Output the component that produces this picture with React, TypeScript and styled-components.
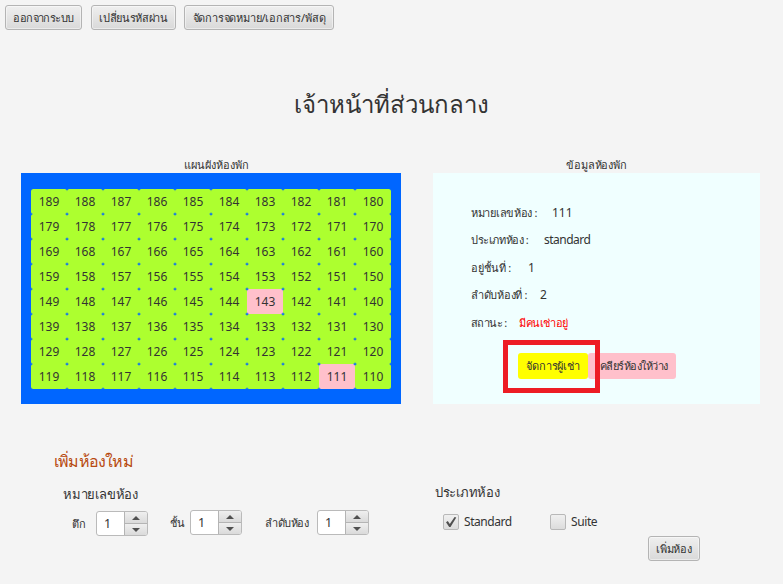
import React from "react";
import styled, { createGlobalStyle } from "styled-components";

const Global = createGlobalStyle`
  * { box-sizing: border-box; }
  body { margin: 0; background: #f4f4f4; }
`;

const Page = styled.main`
  width: 783px;
  height: 584px;
  overflow: hidden;
  background: #f4f4f4;
  color: #333;
  font: 12px/16px "Noto Sans", "Open Sans", sans-serif;
  white-space: nowrap;
`;

const Toolbar = styled.nav`
  display: flex;
  height: 30px;
  padding: 5px 0 0 5px;
`;

const Text = styled.span<{ $size?: number; $track?: number; $color?: string }>`
  font-size: ${(p) => p.$size ?? 11}px;
  letter-spacing: ${(p) => p.$track ?? 0}px;
  color: ${(p) => p.$color ?? "#333"};
`;

const Button = styled.button<{ $width: number; $gap?: number }>`
  display: flex;
  align-items: center;
  justify-content: center;
  width: ${(p) => p.$width}px;
  height: 25px;
  margin: 0 ${(p) => p.$gap ?? 0}px 0 0;
  padding: 0;
  border: 1px solid #b4b4b4;
  border-radius: 3px;
  background: linear-gradient(#efefef, #d9d9d9);
  box-shadow: inset 0 0 0 1px rgba(255, 255, 255, 0.45);
  font: inherit;
  line-height: 16px;
`;

const Title = styled.h1`
  height: 32px;
  margin: 58px 0 0;
  text-align: center;
  font-weight: 400;
  line-height: 32px;
`;

const Panels = styled.div`
  display: flex;
  gap: 32px;
  margin: 37px 0 0 21px;
`;

const PanelColumn = styled.section<{ $width: number }>`
  width: ${(p) => p.$width}px;
`;

const Caption = styled.div<{ $shift?: number }>`
  height: 16px;
  padding-left: ${(p) => p.$shift ?? 0}px;
  text-align: center;
`;

const FloorPlan = styled.div`
  display: grid;
  grid-template-columns: repeat(10, 36px);
  grid-auto-rows: 25px;
  height: 231px;
  padding: 16px 10px 0;
  background: #0066ff;
`;

const Room = styled.div<{ $taken: boolean }>`
  display: flex;
  align-items: center;
  justify-content: center;
  height: 25px;
  border-radius: 2.5px;
  background: ${(p) => (p.$taken ? "#ffc0cb" : "#adff2f")};
  font-size: 12px;
`;

const Details = styled.div`
  height: 231px;
  padding: 26px 0 0 38px;
  background: #f0ffff;
`;

const DetailRow = styled.div`
  display: flex;
  align-items: center;
  height: 27.5px;
`;

const DetailLabel = styled.div<{ $width: number }>`
  width: ${(p) => p.$width}px;
`;

const Actions = styled.div`
  display: flex;
  position: relative;
  width: max-content;
  margin: 16.5px 0 0 47px;
`;

const Action = styled.button<{ $bg: string; $width: number }>`
  width: ${(p) => p.$width}px;
  height: 26px;
  padding: 0;
  border: 0;
  border-radius: 3px;
  background: ${(p) => p.$bg};
  font: inherit;
`;

const Highlight = styled.div`
  position: absolute;
  left: -15px;
  top: -13px;
  width: 97px;
  height: 53px;
  border: 5px solid #ed1c24;
`;

const Form = styled.section`
  display: flex;
  padding: 45px 0 0 54px;
`;

const Side = styled.div<{ $width: number; $top?: number }>`
  width: ${(p) => p.$width}px;
  padding-top: ${(p) => p.$top ?? 0}px;
`;

const Heading = styled.h2<{ $height: number; $indent?: number }>`
  height: ${(p) => p.$height}px;
  margin: 0;
  padding-left: ${(p) => p.$indent ?? 0}px;
  font-weight: 400;
  line-height: 22px;
`;

const Fields = styled.div`
  display: flex;
  padding-left: 18px;
`;

const Field = styled.div<{ $width: number; $label: number; $drop?: number }>`
  display: grid;
  grid-template-columns: ${(p) => p.$label}px 52px;
  align-items: center;
  width: ${(p) => p.$width}px;
  height: 25px;
  margin-top: ${(p) => p.$drop ?? 0}px;
`;

const Spinner = styled.div`
  display: grid;
  grid-template-columns: 27px 23px;
  width: 52px;
  height: 25px;
  border: 1px solid #bababa;
  border-radius: 3px;
  overflow: hidden;
  background: #fff;
`;

const Value = styled.div`
  padding-left: 7px;
  font-size: 12.5px;
  line-height: 23px;
`;

const Steps = styled.div`
  display: grid;
  grid-template-rows: 11px 12px;
  width: 23px;
  border-left: 1px solid #b4b4b4;
`;

const Step = styled.div`
  display: flex;
  align-items: center;
  justify-content: center;
  background: linear-gradient(#efefef, #dadada);
  & + & { border-top: 1px solid #b4b4b4; }
`;

const Checks = styled.div`
  display: flex;
  padding-left: 8px;
`;

const Check = styled.label<{ $width: number }>`
  display: flex;
  align-items: center;
  gap: 5px;
  width: ${(p) => p.$width}px;
  height: 16px;
`;

const Box = styled.span`
  display: flex;
  align-items: center;
  justify-content: center;
  width: 16px;
  height: 16px;
  border: 1px solid #b8b8b8;
  border-radius: 2px;
  background: linear-gradient(#f0f0f0, #dcdcdc);
`;

const Submit = styled.div`
  padding: 6px 0 0 213px;
`;

const Arrow = ({ down = false }: { down?: boolean }) => (
  <svg width="8" height="4" viewBox="0 0 8 4">
    <path d={down ? "M0 0H8L4 4Z" : "M0 4H8L4 0Z"} fill="#505050" />
  </svg>
);

const NumberField = (p: { label: string; width: number; labelWidth: number; track?: number; drop?: number }) => (
  <Field $width={p.width} $label={p.labelWidth} $drop={p.drop}>
    <Text $track={p.track}>{p.label}</Text>
    <Spinner>
      <Value>1</Value>
      <Steps>
        <Step><Arrow /></Step>
        <Step><Arrow down /></Step>
      </Steps>
    </Spinner>
  </Field>
);

const rooms = Array.from({ length: 80 }, (_, i) => 189 - i);
const taken = [143, 111];

const details = [
  { label: "หมายเลขห้อง :", width: 81, value: "111", track: -0.3 },
  { label: "ประเภทห้อง :", width: 73, value: "standard", track: -0.4, valueTrack: -0.5 },
  { label: "อยู่ชั้นที่ :", width: 57, value: "1", track: -0.1 },
  { label: "ลำดับห้องที่ :", width: 69, value: "2", track: -0.3 },
];

export default function App() {
  return (
    <Page>
      <Global />
      <Toolbar>
        <Button $width={77} $gap={9}><Text $track={-0.6}>ออกจากระบบ</Text></Button>
        <Button $width={85} $gap={8}><Text $track={-0.35}>เปลี่ยนรหัสผ่าน</Text></Button>
        <Button $width={150}><Text $track={-0.2}>จัดการจดหมาย/เอกสาร/พัสดุ</Text></Button>
      </Toolbar>
      <Title><Text $size={24}>เจ้าหน้าที่ส่วนกลาง</Text></Title>
      <Panels>
        <PanelColumn $width={380}>
          <Caption $shift={10}><Text>แผนผังห้องพัก</Text></Caption>
          <FloorPlan>
            {rooms.map((n) => <Room key={n} $taken={taken.includes(n)}>{n}</Room>)}
          </FloorPlan>
        </PanelColumn>
        <PanelColumn $width={327}>
          <Caption><Text $track={-0.2}>ข้อมูลห้องพัก</Text></Caption>
          <Details>
            {details.map((d) => (
              <DetailRow key={d.label}>
                <DetailLabel $width={d.width}><Text $track={d.track}>{d.label}</Text></DetailLabel>
                <Text $size={12} $track={d.valueTrack}>{d.value}</Text>
              </DetailRow>
            ))}
            <DetailRow>
              <DetailLabel $width={48}><Text $track={-0.6}>สถานะ :</Text></DetailLabel>
              <Text $color="#ff0000" $track={-0.4}>มีคนเช่าอยู่</Text>
            </DetailRow>
            <Actions>
              <Action $bg="#ffff00" $width={70}><Text $track={-0.2}>จัดการผู้เช่า</Text></Action>
              <Action $bg="#ffc0cb" $width={88}><Text $track={-0.5}>เคลียร์ห้องให้ว่าง</Text></Action>
              <Highlight />
            </Actions>
          </Details>
        </PanelColumn>
      </Panels>
      <Form>
        <Side $width={381}>
          <Heading $height={32}><Text $size={16} $track={-0.8} $color="#b84a10">เพิ่มห้องใหม่</Text></Heading>
          <Heading $height={29} $indent={9}><Text $size={13} $track={-0.2}>หมายเลขห้อง</Text></Heading>
          <Fields>
            <NumberField label="ตึก" width={98} labelWidth={24} drop={1} />
            <NumberField label="ชั้น" width={95} labelWidth={20} />
            <NumberField label="ลำดับห้อง" width={104} labelWidth={52} track={-0.4} />
          </Fields>
        </Side>
        <Side $width={300} $top={30}>
          <Heading $height={35}><Text $size={13} $track={-0.3}>ประเภทห้อง</Text></Heading>
          <Checks>
            <Check $width={107}>
              <Box>
                <svg width="12" height="12" viewBox="0 0 12 12">
                  <path d="M1 6.2 2.8 5 4.8 8 9.6 1 11.3 1.5 5.5 11H4.2Z" fill="#505050" />
                </svg>
              </Box>
              <Text $size={12} $track={-0.45}>Standard</Text>
            </Check>
            <Check $width={80}><Box /><Text $size={12} $track={-0.4}>Suite</Text></Check>
          </Checks>
          <Submit><Button $width={52}><Text $track={-0.2}>เพิ่มห้อง</Text></Button></Submit>
        </Side>
      </Form>
    </Page>
  );
}
